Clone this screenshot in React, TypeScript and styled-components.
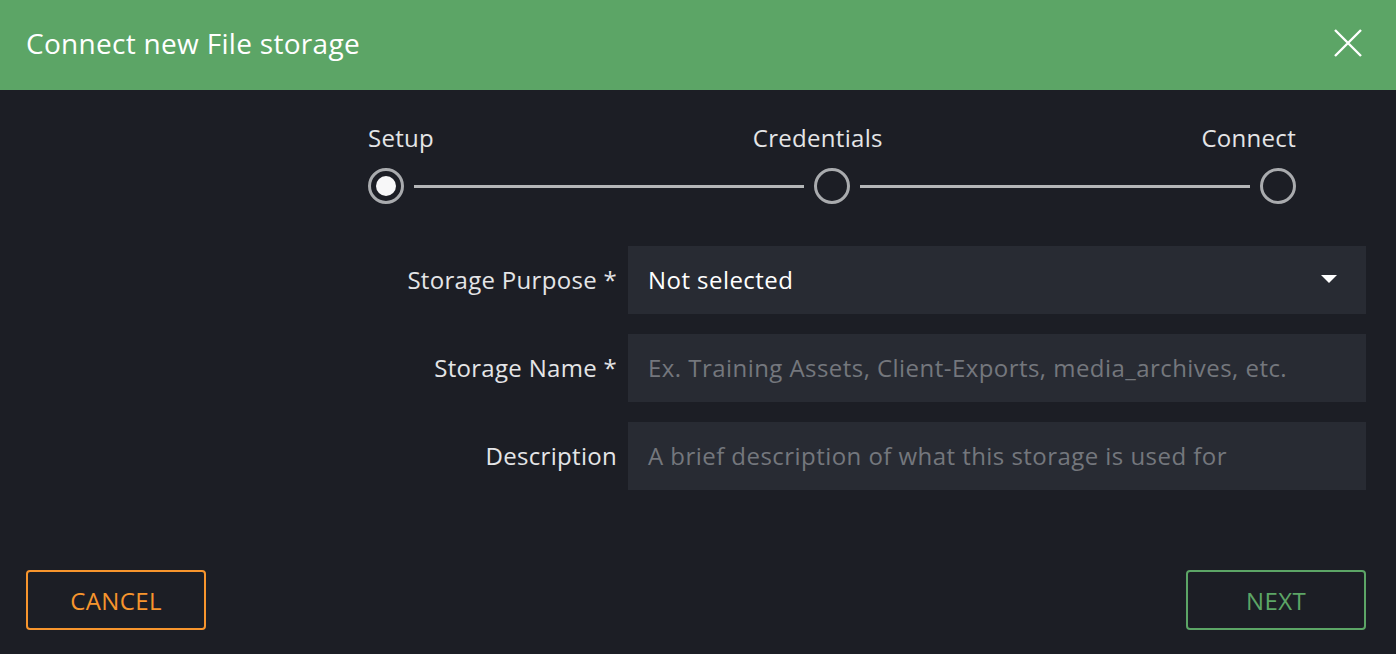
import React from "react";
import styled, { createGlobalStyle } from "styled-components";

const Global = createGlobalStyle`
  html, body {
    margin: 0;
    padding: 0;
    background: #1c1e25;
  }
  * {
    box-sizing: border-box;
  }
`;

const Dialog = styled.div`
  display: flex;
  flex-direction: column;
  width: 1396px;
  height: 654px;
  background: #1c1e25;
  font-family: "Open Sans", "Noto Sans", sans-serif;
  color: #e4e5e7;
`;

const Header = styled.div`
  display: flex;
  align-items: center;
  justify-content: space-between;
  height: 90px;
  padding: 0 34px 5px 26px;
  background: #5ca566;
`;

const Title = styled.h1`
  margin: 0;
  font-size: 28px;
  font-weight: 400;
  letter-spacing: 0.3px;
  color: #ffffff;
`;

const CloseButton = styled.button`
  display: flex;
  padding: 0;
  border: none;
  background: none;
  cursor: pointer;
`;

const Body = styled.div`
  flex: 1;
  display: flex;
  flex-direction: column;
  padding: 32px 30px 24px 26px;
`;

const Stepper = styled.div`
  display: flex;
  flex-direction: column;
  width: 928px;
  margin-left: 342px;
  gap: 14px;
`;

const StepLabels = styled.div`
  display: flex;
  justify-content: space-between;
  font-size: 24px;
  line-height: 32px;
  letter-spacing: 0.3px;
  color: #e4e5e7;
`;

const StepTrack = styled.div`
  display: flex;
  align-items: center;
`;

const StepDot = styled.div<{ $active?: boolean }>`
  width: 36px;
  height: 36px;
  flex-shrink: 0;
  border-radius: 50%;
  border: 3px solid #a9abae;
  display: flex;
  align-items: center;
  justify-content: center;
  &::after {
    content: "";
    display: ${(p) => (p.$active ? "block" : "none")};
    width: 20px;
    height: 20px;
    border-radius: 50%;
    background: #f7f7f8;
  }
`;

const StepLine = styled.div`
  flex: 1;
  height: 3px;
  margin: 0 10px;
  background: #b4b6b8;
`;

const Form = styled.div`
  display: grid;
  grid-template-columns: 591px 1fr;
  column-gap: 11px;
  row-gap: 20px;
  margin-top: 42px;
`;

const Label = styled.label`
  align-self: center;
  text-align: right;
  font-size: 24px;
  letter-spacing: 0.3px;
  color: #e4e5e7;
  margin-top: -2px;
`;

const Field = styled.div`
  display: flex;
  align-items: center;
  justify-content: space-between;
  height: 68px;
  padding: 0 28px 2px 20px;
  background: #282b33;
  font-size: 24px;
  letter-spacing: 0.45px;
`;

const Value = styled.span`
  color: #ffffff;
  font-weight: 500;
`;

const Placeholder = styled.span`
  color: #74777d;
`;

const Footer = styled.div`
  display: flex;
  justify-content: space-between;
  margin-top: auto;
`;

const OutlineButton = styled.button<{ $color: string }>`
  width: 180px;
  height: 60px;
  border: 2px solid ${(p) => p.$color};
  border-radius: 4px;
  background: transparent;
  color: ${(p) => p.$color};
  font-family: "Open Sans", "Noto Sans", sans-serif;
  font-size: 24px;
  letter-spacing: 0.4px;
  cursor: pointer;
`;

const steps = ["Setup", "Credentials", "Connect"];

const fields = [
  { label: "Storage Purpose *", value: "Not selected", select: true },
  { label: "Storage Name *", placeholder: "Ex. Training Assets, Client-Exports, media_archives, etc." },
  { label: "Description", placeholder: "A brief description of what this storage is used for" },
];

export default function App() {
  return (
    <>
      <Global />
      <Dialog>
        <Header>
          <Title>Connect new File storage</Title>
          <CloseButton aria-label="Close">
            <svg width="28" height="28" viewBox="0 0 28 28">
              <path d="M1 1 L27 27 M27 1 L1 27" stroke="#ffffff" strokeWidth="2.4" />
            </svg>
          </CloseButton>
        </Header>
        <Body>
          <Stepper>
            <StepLabels>
              {steps.map((s) => (
                <span key={s}>{s}</span>
              ))}
            </StepLabels>
            <StepTrack>
              <StepDot $active />
              <StepLine />
              <StepDot />
              <StepLine />
              <StepDot />
            </StepTrack>
          </Stepper>
          <Form>
            {fields.map((f) => (
              <React.Fragment key={f.label}>
                <Label>{f.label}</Label>
                <Field>
                  {f.value ? <Value>{f.value}</Value> : <Placeholder>{f.placeholder}</Placeholder>}
                  {f.select && (
                    <svg width="18" height="10" viewBox="0 0 18 10">
                      <path d="M1 1 H17 L9 9 Z" fill="#ffffff" />
                    </svg>
                  )}
                </Field>
              </React.Fragment>
            ))}
          </Form>
          <Footer>
            <OutlineButton $color="#f7952d">CANCEL</OutlineButton>
            <OutlineButton $color="#5ca566">NEXT</OutlineButton>
          </Footer>
        </Body>
      </Dialog>
    </>
  );
}
